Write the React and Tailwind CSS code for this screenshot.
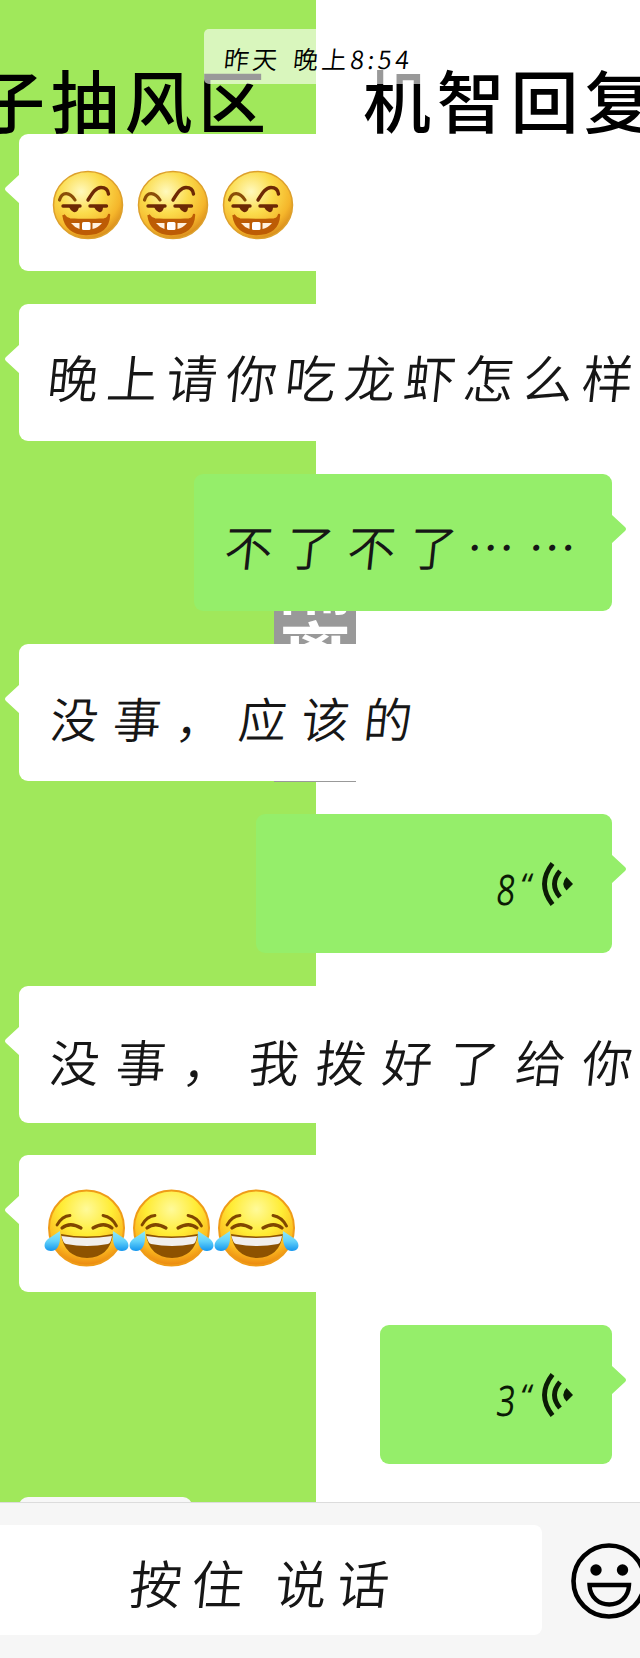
import React from "react";

const HAND =
  "block whitespace-nowrap font-['Noto_Sans_CJK_SC',sans-serif] font-[350] text-[#161616] -skew-x-6";

function Bubble({ side = "left", className = "", children }) {
  const left = side === "left";
  return (
    <div
      className={`relative flex shrink-0 items-center rounded-[9px] ${
        left ? "self-start bg-white" : "mr-7 self-end bg-[#95ee6a]"
      } ${className}`}
    >
      <svg
        className={`absolute top-[39px] h-8 w-[15px] ${left ? "-left-[14px]" : "-right-[14px]"}`}
        viewBox="0 0 15 32"
      >
        <path
          d={left ? "M15 0 L14 2 L1 14 Q-1 16 1 18 L14 30 L15 32Z" : "M0 0 L1 2 L14 14 Q16 16 14 18 L1 30 L0 32Z"}
          fill={left ? "#fff" : "#95ee6a"}
        />
      </svg>
      {children}
    </div>
  );
}

function Sly() {
  return (
    <svg className="h-[72px] w-[72px]" viewBox="0 0 72 72" fill="none">
      <ellipse cx="36" cy="36" rx="34.500" ry="33.500" fill="url(#slyFace)" stroke="#dda02c" strokeWidth="1.5" />
      <path d="M7.500 31 C10 22 18 23 23 31" stroke="#8a4d08" strokeWidth="3.2" strokeLinecap="round" />
      <path d="M36 31 C41 23 44 18.500 49 18.500 C54 18.500 56 21 56.500 25" stroke="#6d2805" strokeWidth="3.4" strokeLinecap="round" />
      <path d="M11 37 H28 M38 37 H54.500" stroke="#6d2805" strokeWidth="3.4" strokeLinecap="round" />
      <path d="M17 38 H27 Q26 44 21.500 43 Q18 41 17 38 M42 38 H51 Q51 44 47 43 Q43 41 42 38" fill="#6d2805" />
      <path d="M11.500 46 Q14 50 18 50.500 Q35 51.500 52 50.500 Q56 50 57 46 Q56 65 34 65 Q14 64 11.500 46" fill="#bd5c05" stroke="#bd5c05" strokeWidth="2.5" strokeLinejoin="round" />
      <path d="M19 54 H27.500 V60 Q22 58 19 54 M40.500 54 H50 Q46 59 40.500 60Z" fill="#fff1df" />
      <rect x="30" y="53" width="8.500" height="8" rx="1.5" fill="#fff" />
    </svg>
  );
}

function Joy() {
  return (
    <svg className="h-[80px] w-[85px]" viewBox="0 0 85 80" fill="none">
      <circle cx="42.500" cy="40" r="37.500" fill="url(#joyFace)" stroke="#ef9c18" strokeWidth="2" />
      <path d="M13 37 Q18 28 26 27.500 M59 27.500 Q68 29 72.500 38" stroke="#804600" strokeWidth="2.800" strokeLinecap="round" />
      <path d="M18 40 Q26 33.500 37 40 M49 40 Q60 33.500 68 40" stroke="#804600" strokeWidth="3.200" strokeLinecap="round" />
      <path d="M17 46 Q42.500 51 69 46 Q66 69 43 70 Q20 69 17 46" fill="#8d5200" />
      <path d="M17.500 48 Q42 52 68 48 Q67 55 64 56 Q43 60 22 56 Q19 55 17.500 48" fill="#f1efed" />
      <path d="M16 43 C17 56 14 63 7 63 C-1 63 -1 55 4 51 C8 48 12 46 16 43" fill="url(#tear)" />
      <path d="M69 43 C68 56 71 63 78 63 C86 63 86 55 81 51 C77 48 73 46 69 43" fill="url(#tear)" />
    </svg>
  );
}

function Voice({ seconds }) {
  return (
    <div className="flex w-full items-center justify-end pr-[39px]">
      <span className="mt-[11px] block -skew-x-6 font-['Open_Sans',sans-serif] text-[42px] leading-none font-normal text-[#0b1b05]">
        <span className="inline-block w-5 origin-left scale-x-[.78]">{seconds}</span>
      </span>
      <span className="mr-[9px] ml-[4px] block h-[34px] w-3 -skew-x-6 font-['Open_Sans',sans-serif] text-[33px] leading-[36px] text-[#0b1b05]">“</span>
      <svg className="mt-px h-[44px] w-[31px]" viewBox="0 0 31 44" fill="none">
        <path d="M10.500 1.500 Q-5.500 22 10.500 42.500" stroke="#0b1b05" strokeWidth="4.800" />
        <path d="M18 9 Q7 22 18 35" stroke="#0b1b05" strokeWidth="4.800" />
        <path d="M24.500 15 L31 22 L24.500 28.500 Q18 22 24.500 15" fill="#0b1b05" />
      </svg>
    </div>
  );
}

function Title({ className, children }) {
  return (
    <div
      className={`absolute top-[64px] h-[70px] font-['Noto_Sans_CJK_SC',sans-serif] text-[68px] leading-[70px] font-medium tracking-[5.700px] whitespace-nowrap text-black ${className}`}
    >
      {children}
    </div>
  );
}

export default function App() {
  return (
    <div className="flex h-[1658px] w-[640px] flex-col overflow-hidden bg-white">
      <svg className="absolute h-0 w-0">
        <defs>
          <radialGradient id="slyFace" cx=".4" cy=".3" r=".72">
            <stop offset="0" stopColor="#fff9bd" />
            <stop offset=".45" stopColor="#fbdc4c" />
            <stop offset=".8" stopColor="#f5b62b" />
            <stop offset="1" stopColor="#d98c1c" />
          </radialGradient>
          <radialGradient id="joyFace" cx=".5" cy=".25" r=".75">
            <stop offset="0" stopColor="#fffa9a" />
            <stop offset=".45" stopColor="#ffec35" />
            <stop offset=".78" stopColor="#fcbc20" />
            <stop offset="1" stopColor="#ea8610" />
          </radialGradient>
          <linearGradient id="tear" x1="0" y1="0" x2="0" y2="1">
            <stop offset="0" stopColor="#8fe9f5" />
            <stop offset=".5" stopColor="#62d2fa" />
            <stop offset="1" stopColor="#1496ee" />
          </linearGradient>
        </defs>
      </svg>

      <main className="relative h-[1502px] shrink-0 overflow-hidden">
        <div className="absolute inset-y-0 left-0 w-[316px] bg-[#a0e85b]" />
        <Title className="-left-[23px]">子抽风区</Title>
        <Title className="left-[363px]">机智回复</Title>
        <div className="absolute top-[540px] left-[274px] flex h-[242px] w-[82px] flex-col items-center bg-[#999] font-['Noto_Sans_CJK_SC',sans-serif] text-[72px] leading-[74px] font-bold text-white">
          <span>隔</span>
          <span>离</span>
        </div>

        <div className="relative flex flex-col">
          <div className="mt-[29px] ml-[204px] flex h-[55px] w-[226px] items-center rounded-[5px] bg-white/60 pl-[20px]">
            <span className="mt-[3px] block -skew-x-6 font-['Noto_Sans_CJK_SC',sans-serif] text-[25px] leading-none font-[350] tracking-[3.600px] [word-spacing:3px] whitespace-nowrap text-black">
              昨天 晚上8:54
            </span>
          </div>

          <Bubble className="mt-[50px] ml-[19px] h-[137px] w-[640px] gap-[13px] pt-[5px] pl-[33px]">
            <Sly />
            <Sly />
            <Sly />
          </Bubble>

          <Bubble className="mt-[33px] ml-[19px] h-[137px] w-[640px] pl-[29px]">
            <span className={`${HAND} mt-[7px] text-[51px] leading-none tracking-[8.400px]`}>晚上请你吃龙虾怎么样</span>
          </Bubble>

          <Bubble side="right" className="mt-[33px] h-[137px] w-[418px] pl-[31px]">
            <span className={`${HAND} mt-[5px] text-[48px] leading-none tracking-[13.500px]`}>
              不了不了<span className="-ml-1">……</span>
            </span>
          </Bubble>

          <Bubble className="mt-[33px] ml-[19px] h-[137px] w-[640px] pl-[32px]">
            <span className={`${HAND} mt-[8px] text-[48px] leading-none tracking-[14.700px]`}>没事，应该的</span>
          </Bubble>

          <Bubble side="right" className="mt-[33px] h-[139px] w-[356px]">
            <Voice seconds="8" />
          </Bubble>

          <Bubble className="mt-[33px] ml-[19px] h-[137px] w-[640px] pl-[31px]">
            <span className={`${HAND} mt-[11px] text-[50px] leading-none tracking-[16.600px]`}>没事，我拨好了给你</span>
          </Bubble>

          <Bubble className="mt-8 ml-[19px] h-[137px] w-[640px] pt-[8px] pl-[25px]">
            <Joy />
            <Joy />
            <Joy />
          </Bubble>

          <Bubble side="right" className="mt-[33px] h-[139px] w-[232px]">
            <Voice seconds="3" />
          </Bubble>

          <div className="mt-[33px] ml-[19px] h-10 w-[173px] rounded-[9px] bg-[#f7f7f7]" />
        </div>
      </main>

      <footer className="flex h-[156px] shrink-0 items-start border-t border-[#dcdcdc] bg-[#f6f6f6] pt-[22px]">
        <div className="flex h-[110px] w-[542px] shrink-0 items-center justify-center rounded-r-[8px] bg-white pr-[12px]">
          <span className={`${HAND} mt-[3px] text-[52px] leading-none tracking-[10px]`}>按住 说话</span>
        </div>
        <svg className="mt-[18px] ml-[29px] h-[76px] w-[76px] shrink-0" viewBox="0 0 76 76" fill="none">
          <circle cx="38" cy="38" r="35.500" stroke="#000" strokeWidth="4.600" />
          <circle cx="25" cy="27" r="5.700" fill="#000" />
          <circle cx="51.500" cy="27" r="5.700" fill="#000" />
          <path d="M18.500 42 H58 C57 68 19.500 68 18.500 42Z" stroke="#000" strokeWidth="4.400" />
        </svg>
      </footer>
    </div>
  );
}
